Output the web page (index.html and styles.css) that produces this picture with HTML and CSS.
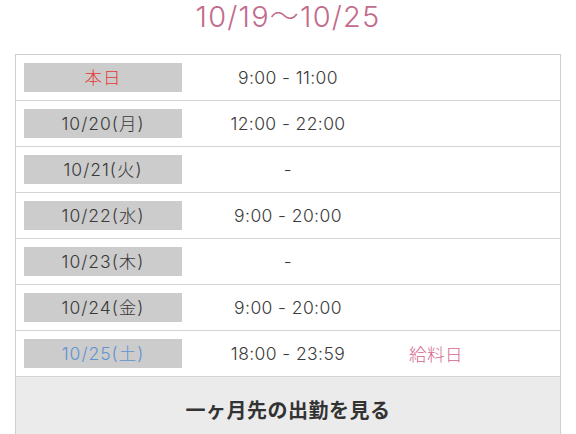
FILE: index.html
```html
<!DOCTYPE html>
<html lang="ja">
<head>
<meta charset="utf-8">
<link rel="stylesheet" href="styles.css">
</head>
<body>
<div class="page">
  <h1 class="title">10/19〜10/25</h1>
  <div class="schedule">
    <div class="row">
      <div class="day today">本日</div>
      <div class="time">9:00 - 11:00</div>
      <div class="note"></div>
    </div>
    <div class="row">
      <div class="day">10/20(月)</div>
      <div class="time">12:00 - 22:00</div>
      <div class="note"></div>
    </div>
    <div class="row">
      <div class="day">10/21(火)</div>
      <div class="time">-</div>
      <div class="note"></div>
    </div>
    <div class="row">
      <div class="day">10/22(水)</div>
      <div class="time">9:00 - 20:00</div>
      <div class="note"></div>
    </div>
    <div class="row">
      <div class="day">10/23(木)</div>
      <div class="time">-</div>
      <div class="note"></div>
    </div>
    <div class="row">
      <div class="day">10/24(金)</div>
      <div class="time">9:00 - 20:00</div>
      <div class="note"></div>
    </div>
    <div class="row">
      <div class="day sat">10/25(土)</div>
      <div class="time">18:00 - 23:59</div>
      <div class="note payday">給料日</div>
    </div>
    <div class="more">一ヶ月先の出勤を見る</div>
  </div>
</div>
</body>
</html>
```

FILE: styles.css
```css
html, body {
  margin: 0;
  padding: 0;
  background: #ffffff;
}
body {
  font-family: Inter, "Noto Sans CJK JP", sans-serif;
  color: #333333;
}
.page {
  padding: 0 15px;
}
.title {
  margin: 0;
  height: 54px;
  line-height: 34px;
  text-align: center;
  font-size: 29px;
  font-weight: 300;
  color: #c26b8c;
  letter-spacing: 1.2px;
}
.schedule {
  border: 1px solid #cfcfcf;
  border-bottom: none;
}
.row {
  display: grid;
  grid-template-columns: 158px 212px 84px;
  align-items: center;
  height: 45px;
  padding-left: 8px;
  border-bottom: 1px solid #d4d4d4;
}
.day {
  background: #cccccc;
  height: 29px;
  line-height: 29px;
  text-align: center;
  font-size: 17.5px;
  font-weight: 300;
  letter-spacing: 1px;
  color: #3a3a3a;
}
.day.today {
  color: #e23a34;
}
.day.sat {
  color: #5f93d2;
}
.time {
  text-align: center;
  font-size: 17.5px;
  font-weight: 300;
  letter-spacing: 0.4px;
  color: #3a3a3a;
}
.note {
  text-align: center;
  font-size: 17.5px;
  font-weight: 300;
  letter-spacing: 0.5px;
}
.payday {
  color: #d4668f;
}
.more {
  background: #ebebeb;
  height: 70px;
  line-height: 68px;
  text-align: center;
  font-size: 20px;
  font-weight: 700;
  letter-spacing: 0.5px;
  color: #333333;
}
```
